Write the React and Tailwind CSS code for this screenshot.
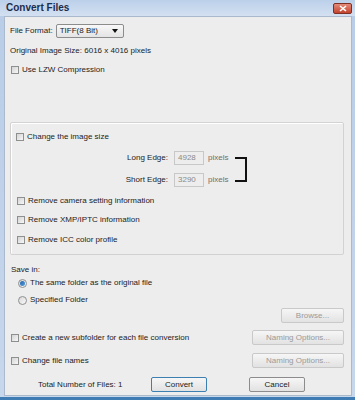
import React from 'react';

const Check = ({ label, className = '' }) => (
    <div className={`flex items-center h-[10px] ${className}`}>
        <span className="w-[8px] h-[8px] border border-[#8e8f8f] bg-gradient-to-br from-[#d4d4d4] to-[#f7f7f7] shrink-0" />
        <span className="ml-[3px] leading-none">{label}</span>
    </div>
);

const Radio = ({ label, checked, className = '' }) => (
    <div className={`flex items-center h-[10px] ${className}`}>
        <span className="w-[9px] h-[9px] rounded-full border border-[#8e8f8f] bg-gradient-to-br from-[#d8d8d8] to-[#fafafa] shrink-0 flex items-center justify-center">
            {checked && <span className="w-[5px] h-[5px] rounded-full bg-gradient-to-br from-[#1b5fa8] to-[#5aa0e0]" />}
        </span>
        <span className="ml-[3px] leading-none">{label}</span>
    </div>
);

const Btn = ({ children, w, disabled, primary }) => (
    <div
        className={`${w} h-[15px] flex items-center justify-center rounded-[2px] border leading-none bg-gradient-to-b from-[#f6f6f6] to-[#e2e2e2] ${
            primary ? 'border-[#3c7fb1]' : disabled ? 'border-[#c9c9c9]' : 'border-[#8c8c8c]'
        } ${disabled ? 'text-[#9a9a9a]' : 'text-[#1a1a1a]'}`}
    >
        {children}
    </div>
);

const EdgeRow = ({ label, value, className = '' }) => (
    <div className={`flex items-center h-[14px] ${className}`}>
        <span className="w-[157px] text-right leading-none">{label}</span>
        <div className="ml-[6px] w-[30px] h-[14px] border border-[#c8c8c8] bg-[#ededed] text-[#8a8a8a] flex items-center pl-[3px] leading-none">
            {value}
        </div>
        <span className="ml-[4px] text-[#6d6d6d] leading-none">pixels</span>
    </div>
);

export default function App() {
    return (
        <div className="w-[355px] h-[400px] flex flex-col bg-gradient-to-b from-[#b9cde8] to-[#c7d7ec] font-['Liberation_Sans',Arial,sans-serif] text-[8px] text-[#1c1c1c] border-b-[3px] border-[#3f7cb4]">
            {/* title bar */}
            <div className="h-[16px] flex items-center justify-between pl-[6px] pr-[3px] shrink-0 bg-gradient-to-b from-[#bcd0ea] to-[#d3e0f1]">
                <span className="font-bold text-[10px] text-[#1d2c4c] leading-none">Convert Files</span>
                <div className="w-[19px] h-[11px] rounded-[2px] border border-[#7e3024] bg-gradient-to-b from-[#e48a7a] to-[#c2412c] flex items-center justify-center">
                    <svg width="8" height="7" viewBox="0 0 8 7">
                        <path d="M1 1 L7 6 M7 1 L1 6" stroke="#ffffff" strokeWidth="1.6" />
                    </svg>
                </div>
            </div>

            {/* client area */}
            <div className="flex-1 ml-[4px] mr-[3px] mb-[1px] bg-[#ededed] border border-[#aab9cc] flex flex-col pl-[5px] pr-[7px]">
                <div className="flex items-center h-[14px] mt-[7px]">
                    <span className="leading-none">File Format:</span>
                    <div className="ml-[3px] w-[68px] h-[14px] border border-[#8c8c8c] rounded-[2px] bg-gradient-to-b from-[#f8f8f8] to-[#e4e4e4] flex items-center justify-between pl-[3px] pr-[5px]">
                        <span className="leading-none">TIFF(8 Bit)</span>
                        <svg width="6" height="4" viewBox="0 0 6 4">
                            <path d="M0 0 H6 L3 4 Z" fill="#111111" />
                        </svg>
                    </div>
                </div>

                <div className="mt-[8px] h-[10px] flex items-center leading-none">Original Image Size: 6016 x 4016 pixels</div>

                <Check label="Use LZW Compression" className="mt-[9px] pl-[1px]" />

                {/* image size group */}
                <div className="mt-[47px] h-[133px] border border-[#d2d2d2] rounded-[2px] shadow-[inset_1px_1px_0_#ffffff] flex flex-col pl-[5px]">
                    <Check label="Change the image size" className="mt-[9px]" />
                    <div className="flex items-start">
                        <div className="flex flex-col -ml-[5px]">
                            <EdgeRow label="Long Edge:" value="4928" className="mt-[9px]" />
                            <EdgeRow label="Short Edge:" value="3290" className="mt-[8px]" />
                        </div>
                        <div className="ml-[7px] mt-[15px] w-[12px] h-[25px] border-t-2 border-r-2 border-b-2 border-[#111111]" />
                    </div>
                    <Check label="Remove camera setting information" className="mt-[9px] pl-[1px]" />
                    <Check label="Remove XMP/IPTC information" className="mt-[9px] pl-[1px]" />
                    <Check label="Remove ICC color profile" className="mt-[10px] pl-[1px]" />
                </div>

                <div className="mt-[10px] h-[10px] flex items-center leading-none pl-[1px]">Save in:</div>
                <Radio label="The same folder as the original file" checked className="mt-[3px] pl-[8px]" />
                <Radio label="Specified Folder" className="mt-[7px] pl-[8px]" />

                <div className="mt-[3px] flex justify-end">
                    <Btn w="w-[63px]" disabled>Browse...</Btn>
                </div>

                <div className="mt-[7px] flex items-center justify-between">
                    <Check label="Create a new subfolder for each file conversion" className="pl-[1px]" />
                    <Btn w="w-[92px]" disabled>Naming Options...</Btn>
                </div>

                <div className="mt-[8px] flex items-center justify-between">
                    <Check label="Change file names" className="pl-[1px]" />
                    <Btn w="w-[92px]" disabled>Naming Options...</Btn>
                </div>

                <div className="mt-[9px] flex items-center">
                    <span className="ml-[28px] w-[113px] leading-none">Total Number of Files: 1</span>
                    <Btn w="w-[56px]" primary>Convert</Btn>
                    <div className="ml-[42px]">
                        <Btn w="w-[56px]">Cancel</Btn>
                    </div>
                </div>
            </div>
        </div>
    );
}
